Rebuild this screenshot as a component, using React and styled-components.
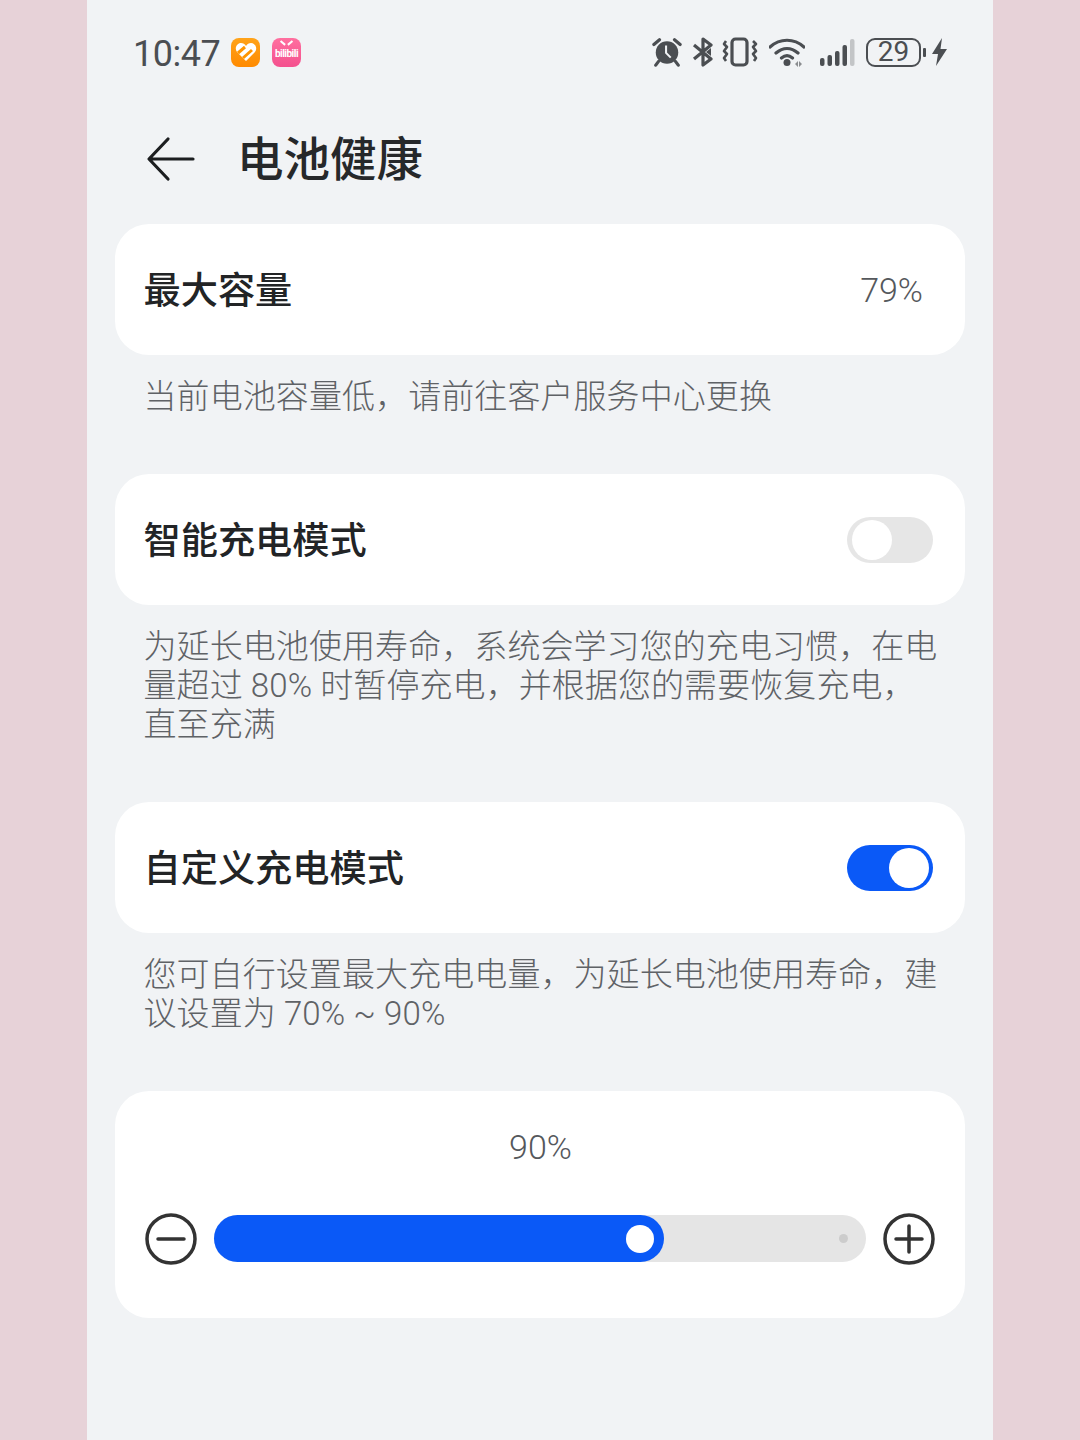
import React from "react";
import styled, { createGlobalStyle } from "styled-components";

const Global = createGlobalStyle`
  html, body { margin: 0; padding: 0; background: #e7d2d8; }
  body { font-family: Roboto, "Noto Sans CJK SC", sans-serif; }
`;

const Page = styled.div`
  width: 1080px;
  height: 1440px;
  overflow: hidden;
  background: #e7d2d8;
`;
const Phone = styled.div`
  width: 906px;
  height: 1440px;
  margin-left: 87px;
  background: #f1f3f5;
  padding: 0 28px;
  box-sizing: border-box;
`;
const StatusBar = styled.div`
  height: 104px;
  padding: 0 18px 0 19px;
  display: flex;
  align-items: center;
  justify-content: space-between;
`;
const StatusLeft = styled.div`
  display: flex;
  align-items: center;
`;
const Time = styled.span`
  font-size: 36px;
  color: #4b4e52;
  letter-spacing: -0.5px;
  width: 97px;
  margin: 3px 1px 0 -1px;
`;
const AppIcon = styled.div`
  width: 29px;
  height: 29px;
  border-radius: 8px;
  background: ${(p) => p.$bg};
  margin-right: ${(p) => p.$gap || 0}px;
  display: flex;
  align-items: center;
  justify-content: center;
  overflow: hidden;
`;
const BiliIcon = styled(AppIcon)`
  position: relative;
  padding-top: 3px;
  box-sizing: border-box;
  &::before,
  &::after {
    content: "";
    position: absolute;
    top: 4px;
    width: 6px;
    height: 1.500px;
    background: #fff;
  }
  &::before {
    left: 8px;
    transform: rotate(40deg);
  }
  &::after {
    right: 8px;
    transform: rotate(-40deg);
  }
`;
const TinyLabel = styled.span`
  font-size: 10px;
  font-weight: 700;
  color: #fff;
  letter-spacing: -0.5px;
`;
const StatusRight = styled.div`
  display: flex;
  align-items: center;
`;
const Slot = styled.div`
  display: flex;
  margin-right: ${(p) => p.$gap || 0}px;
`;
const Battery = styled.div`
  width: 55px;
  height: 29px;
  box-sizing: border-box;
  border: 2.5px solid #4b4e52;
  border-radius: 9px;
  font-size: 28px;
  line-height: 24px;
  color: #4b4e52;
  text-align: center;
`;
const BatteryCap = styled.div`
  width: 3px;
  height: 9px;
  border-radius: 1px;
  background: #4b4e52;
  margin: 0 6px 0 2px;
`;
const Header = styled.div`
  height: 120px;
  padding: 0 0 10px 31px;
  box-sizing: border-box;
  display: flex;
  align-items: center;
`;
const BackIcon = styled.svg`
  width: 50px;
  height: 46px;
  margin-right: 41px;
`;
const Title = styled.h1`
  margin: 0 0 6px;
  font-size: 46.500px;
  line-height: 60px;
  font-weight: 500;
  color: #26282a;
  font-family: "Noto Sans CJK SC", sans-serif;
`;
const Card = styled.div`
  background: #fff;
  border-radius: 34px;
`;
const Row = styled(Card)`
  height: 131px;
  padding: 0 32px 0 28.500px;
  display: flex;
  align-items: center;
  justify-content: space-between;
`;
const RowTitle = styled.span`
  font-size: 37.200px;
  font-weight: 500;
  color: #222426;
  font-family: "Noto Sans CJK SC", sans-serif;
  margin-bottom: 4px;
`;
const Value = styled.span`
  font-size: 34px;
  font-weight: 300;
  color: #55585c;
  margin-right: 10px;
`;
const Desc = styled.p`
  margin: 0;
  padding: 22px 28px 58px 28.500px;
  font-size: 33px;
  letter-spacing: 0.08px;
  line-height: 39px;
  font-weight: 300;
  color: #5f6266;
  white-space: nowrap;
`;
const Switch = styled.div`
  width: 86px;
  height: 46px;
  margin-top: 1px;
  padding: 3px ${(p) => (p.$on ? 4 : 5)}px;
  box-sizing: border-box;
  border-radius: 23px;
  background: ${(p) => (p.$on ? "#0a59f7" : "#e6e6e6")};
  display: flex;
  justify-content: ${(p) => (p.$on ? "flex-end" : "flex-start")};
`;
const Knob = styled.div`
  width: 40px;
  height: 40px;
  border-radius: 50%;
  background: #fff;
`;
const SliderCard = styled(Card)`
  height: 227px;
  padding: 32px 30px 0;
  box-sizing: border-box;
`;
const SliderValue = styled.div`
  font-size: 34px;
  font-weight: 300;
  line-height: 48px;
  color: #55585c;
  text-align: center;
  margin-left: 1px;
`;
const SliderRow = styled.div`
  margin-top: 42px;
  display: flex;
  align-items: center;
  justify-content: space-between;
`;
const Track = styled.div`
  width: 652px;
  height: 47px;
  margin-top: -1px;
  border-radius: 24px;
  background: #e5e5e5;
  position: relative;
`;
const Fill = styled.div`
  height: 100%;
  border-radius: 24px;
  background: #0a59f7;
  display: flex;
  align-items: center;
  justify-content: flex-end;
  padding-right: 10px;
  box-sizing: border-box;
`;
const Thumb = styled.div`
  width: 28px;
  height: 28px;
  border-radius: 50%;
  background: #fff;
`;
const EndDot = styled.div`
  position: absolute;
  right: 18px;
  top: 19px;
  width: 9px;
  height: 9px;
  border-radius: 50%;
  background: #cccccc;
`;
const RoundIcon = styled.svg`
  width: 52px;
  height: 52px;
  flex: none;
`;

const dark = "#4b4e52";

const Alarm = () => (
  <svg width="30" height="30" viewBox="0 0 32 32">
    <circle cx="16" cy="16.5" r="12" fill={dark} />
    <path d="M15 9v8l5 5" fill="none" stroke="#f1f3f5" strokeWidth="2.2" />
    <path d="M2 8l6-5M30 8l-6-5M7 26l-3 4M25 26l3 4" fill="none" stroke={dark} strokeWidth="3.400" strokeLinecap="round" />
  </svg>
);
const Bluetooth = () => (
  <svg width="22" height="30" viewBox="0 0 22 30">
    <path d="M2 8l17 14-8 6V2l8 6L2 22" fill="none" stroke={dark} strokeWidth="3.200" strokeLinejoin="round" />
    <path d="M14 15l5-4v8z" fill={dark} />
  </svg>
);
const Vibrate = () => (
  <svg width="36" height="30" viewBox="0 0 36 30">
    <rect x="10" y="2" width="15" height="26" rx="3.500" fill="none" stroke={dark} strokeWidth="3.200" />
    <path d="M4 4l-2 3 3 3-3 4 3 3-3 4 2 3M31 4l3 3-3 3 3 4-3 3 3 4-2 3" fill="none" stroke={dark} strokeWidth="2.600" strokeLinejoin="round" />
  </svg>
);
const Wifi = () => (
  <svg width="36" height="30" viewBox="0 0 36 30">
    <path d="M1 10c10-9 24-9 34 0M7 16c7-6 15-6 22 0M12.500 21c3.500-3 7.500-3 11 0" fill="none" stroke={dark} strokeWidth="3.200" strokeLinecap="round" />
    <circle cx="18" cy="25.500" r="3.500" fill={dark} />
    <path d="M26 27l3-3v6zM33 27l-3-3v6z" fill="#8b8d90" />
  </svg>
);
const Signal = () => (
  <svg width="36" height="28" viewBox="0 0 36 28">
    <rect x="0" y="20" width="4.500" height="8" rx="2" fill={dark} />
    <rect x="7.500" y="17" width="4.500" height="11" rx="2" fill={dark} />
    <rect x="15" y="13" width="4.500" height="15" rx="2" fill={dark} />
    <rect x="22.500" y="7" width="4.500" height="21" rx="2" fill={dark} />
    <rect x="30" y="1" width="4.500" height="27" rx="2" fill="#c3c5c7" />
  </svg>
);
const Bolt = () => (
  <svg width="15" height="28" viewBox="0 0 15 28">
    <path d="M10 0L0 16h6l-2 12L15 11H8.500z" fill={dark} />
  </svg>
);
const Heart = () => (
  <svg width="22" height="20" viewBox="0 0 22 20">
    <path d="M11 19L2 10C-1 6 2 1 6 1c2 0 4 1 5 3 1-2 3-3 5-3 4 0 7 5 4 9z" fill="#fff" />
    <path d="M3 11l7-6M8 16l9-8" stroke="#ff9500" strokeWidth="3" />
  </svg>
);

export default function App() {
  return (
    <Page>
      <Global />
      <Phone>
        <StatusBar>
          <StatusLeft>
            <Time>10:47</Time>
            <AppIcon $bg="linear-gradient(#ffa31a,#ff8a00)" $gap={12}>
              <Heart />
            </AppIcon>
            <BiliIcon $bg="linear-gradient(#ff6f9f,#f4508e)">
              <TinyLabel>bilibili</TinyLabel>
            </BiliIcon>
          </StatusLeft>
          <StatusRight>
            <Slot $gap={10}><Alarm /></Slot>
            <Slot $gap={8}><Bluetooth /></Slot>
            <Slot $gap={11}><Vibrate /></Slot>
            <Slot $gap={15}><Wifi /></Slot>
            <Slot $gap={10}><Signal /></Slot>
            <Battery>29</Battery>
            <BatteryCap />
            <Bolt />
          </StatusRight>
        </StatusBar>
        <Header>
          <BackIcon viewBox="0 0 50 46">
            <path d="M47 23H4M22 3L3 23l19 20" fill="none" stroke="#1c1e20" strokeWidth="3.200" strokeLinecap="round" strokeLinejoin="round" />
          </BackIcon>
          <Title>电池健康</Title>
        </Header>

        <Row>
          <RowTitle>最大容量</RowTitle>
          <Value>79%</Value>
        </Row>
        <Desc>当前电池容量低，请前往客户服务中心更换</Desc>

        <Row>
          <RowTitle>智能充电模式</RowTitle>
          <Switch><Knob /></Switch>
        </Row>
        <Desc>
          为延长电池使用寿命，系统会学习您的充电习惯，在电<br />
          量超过 80% 时暂停充电，并根据您的需要恢复充电，<br />
          直至充满
        </Desc>

        <Row>
          <RowTitle>自定义充电模式</RowTitle>
          <Switch $on><Knob /></Switch>
        </Row>
        <Desc>
          您可自行设置最大充电电量，为延长电池使用寿命，建<br />
          议设置为 70% ~ 90%
        </Desc>

        <SliderCard>
          <SliderValue>90%</SliderValue>
          <SliderRow>
            <RoundIcon viewBox="0 0 52 52">
              <circle cx="26" cy="26" r="24" fill="none" stroke="#333" strokeWidth="3.500" />
              <path d="M13 26h26" stroke="#333" strokeWidth="3.500" strokeLinecap="round" />
            </RoundIcon>
            <Track>
              <Fill style={{ width: 450 }}><Thumb /></Fill>
              <EndDot />
            </Track>
            <RoundIcon viewBox="0 0 52 52">
              <circle cx="26" cy="26" r="24" fill="none" stroke="#333" strokeWidth="3.500" />
              <path d="M13 26h26M26 13v26" stroke="#333" strokeWidth="3.500" strokeLinecap="round" />
            </RoundIcon>
          </SliderRow>
        </SliderCard>
      </Phone>
    </Page>
  );
}
